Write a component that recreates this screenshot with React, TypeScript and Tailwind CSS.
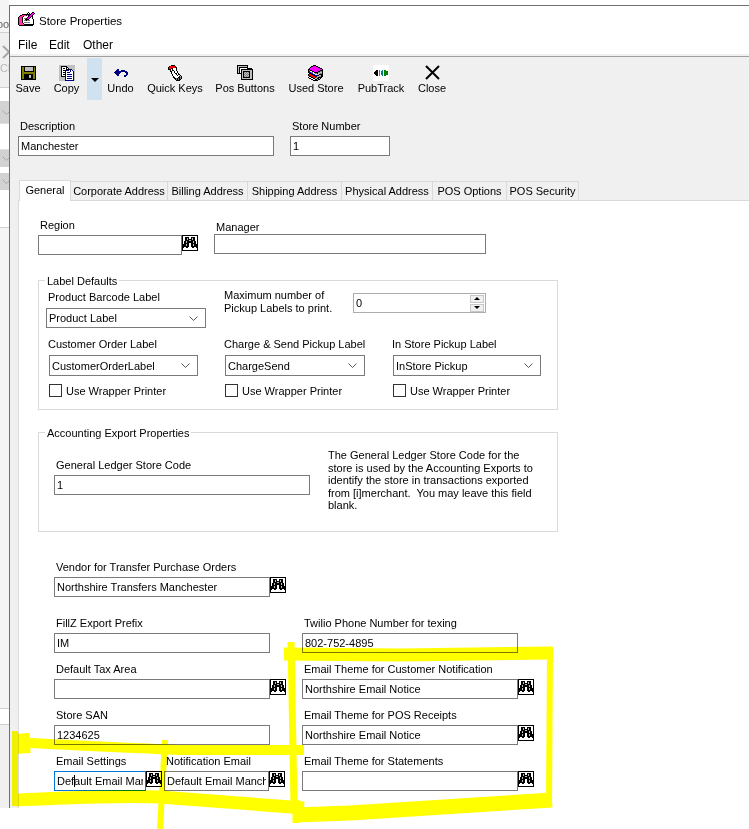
import { ReactNode } from "react";

const palette: Record<string, string> = {
  K: "#000000",
  W: "#ffffff",
  G: "#808080",
  S: "#c0c0c0",
  O: "#808000",
  N: "#000080",
  R: "#ff0000",
  M: "#ff00ff",
  P: "#ff3399",
  T: "#008080",
  E: "#008000",
  B: "#0000ff",
};

function Pixels({ rows, size }: { rows: string[]; size?: number }) {
  const w = rows[0].length;
  const h = rows.length;
  return (
    <svg width={size ?? w} height={size ? (size * h) / w : h} viewBox={`0 0 ${w} ${h}`} shapeRendering="crispEdges" className="block shrink-0">
      {rows.map((row, y) =>
        row.split("").map((c, x) =>
          palette[c] ? <rect key={`${x}-${y}`} x={x} y={y} width={1} height={1} fill={palette[c]} /> : null
        )
      )}
    </svg>
  );
}

const bino = [
  "KKKKKKKKKKKKKKKK",
  "KWWWWWWWWWWWWWWK",
  "KWWKKKKWWKKKKWWK",
  "KWWKKSKWWKSKKWWK",
  "KWWKKSKKKKSKKWWK",
  "KWWKKKKSSKKKKWWK",
  "KWKKSKKKKKKSKKWK",
  "KWKKSKKKKKKSKKWK",
  "KWKKKKKWWKKKKKWK",
  "KKKKSKKWWKKSKKKK",
  "KKKKSKKWWKKSKKKK",
  "KKKKKKKWWKKKKKKK",
  "KKWWKKWWWWKKWWKK",
  "KWWWWWWWWWWWWWWK",
  "KWWWWWWWWWWWWWWK",
  "KKKKKKKKKKKKKKKK",
];

const save = [
  "KKKKKKKKKKKKKKK",
  "KOOKSSSSSSSSKOK",
  "KOOKSSSSSSSSKOK",
  "KOOKSSSSSSSSKOK",
  "KOOKSSSSSSSSKOK",
  "KOOKKKKKKKKKKOK",
  "KOOOOOOOOOOOOOK",
  "KOOOOOOOOOOOOOK",
  "KOOKKKKKKKKKOOK",
  "KOOKKKKKSSKKOOK",
  "KOOKKKKKSSKKOOK",
  "KOOKKKKKSSKKOOK",
  "KOOKKKKKKKKKOOK",
  "KKKKKKKKKKKKKKK",
];

const copy = [
  "SSSSSSSSSSSSSSSS",
  "SSKKKKKKSSSSSSSS",
  "SSKWWWWKKSSSSSSS",
  "SSKWKKWKWKSSSSSS",
  "SSKWWWWKKKNNNSSS",
  "SSKWKKKNNNWNWNSS",
  "SSKWWWNWWWWNWWNS",
  "SSKWKKNWNNNWWWNS",
  "SSKWWWNWWWWWWWNS",
  "SSKWKKNWNNNNNWNS",
  "SSKWWWNWWWWWWWNS",
  "SSKKKKNWNNNNNWNS",
  "SSSSSSNWWWWWWWNS",
  "SSSSSSNWNNNNNWNS",
  "SSSSSSNWWWWWWWNS",
  "SSSSSSNNNNNNNNNS",
];

const undo = [
  "...NN.........",
  "..NNN..NNNN...",
  ".NNNNNNNNNNNN.",
  "NNNNNNN....NNN",
  ".NNNNN......NN",
  "..NNN.......NN",
  "...NN.....NNN.",
  "..........NN..",
];

const hand = [
  "....KKKK.........",
  "..KRRRRRK........",
  ".KRRRRRRKK.......",
  ".KRRKKWWWK.......",
  ".KKKWKWWWK.......",
  "...KWKKWWK.......",
  "...KKWWKWWK......",
  "....KWWKWWK......",
  "....KWWWKKWK.....",
  ".....KWWWKWKK....",
  ".....KWWWWKWSK...",
  "......KWWWWWKSK..",
  "......KKWWWKKGK..",
  ".......KKGKGKGK..",
  "........KGKGKK...",
  ".........KKKK....",
];

const posButtons = [
  "KKKKKKKKKKK.....",
  "KSSSSSSSSSK.....",
  "KSKKKKKKKKK.....",
  "KSKWWWWWWWKKKKK.",
  "KSKWKKKKKKKKKKKK",
  "KSKWKSSSSSSSSSSK",
  "KSKWKSKKKKKKKSSK",
  "KSKWKSKGSGSGKSSK",
  "KKKKKSKSGSGSKSSK",
  "....KSKGSGSGKSSK",
  "....KSKSGSGSKSSK",
  "....KSKGSGSGKSSK",
  "....KSKKKKKKKSSK",
  "....KSSSSSSSSSSK",
  "....KKKKKKKKKKKK",
];

const books = [
  ".....KKK........",
  "...KKMMMKK......",
  "..KMMMMMMMKK....",
  ".KMMMMMMMMMMKK..",
  "KKMMMMMMMMMMMMK.",
  "KGKKMMMMMMMMKKK.",
  "KBWWKKMMMMKKGGK.",
  "KBBGGWKKKKGGSSK.",
  ".KKBBWWGGKSSGGK.",
  "KRRKKBBWWSSKKKK.",
  "KRRRRKKBBKKSSKK.",
  ".KKRRRRKKSSGGKK.",
  "KWWKKRRKGGKKKK..",
  ".KKWWKKSSKKSK...",
  "...KKWWKKSKK....",
  ".....KKKKK......",
];

const pub = [
  "WWWWWWWWWWWWWWWW",
  "WWWWWWWWWWWWWWWW",
  "WWWWWWWWWWWWWWWW",
  "WWWWWWWWWWWWWWWW",
  "WWWWWWWWWWWWWWWW",
  "WWWKKWOWWTWEEWWW",
  "WWKKKWOWTTWEEEEW",
  "WKKKKWOWTTWEEEEW",
  "WKKKKWOWTTWEEEEW",
  "WWKKKWOWTTWEEEEW",
  "WWWKKWOWWTWEEWWW",
  "WWWWWWWWWWWWWWWW",
  "WWWWWWWWWWWWWWWW",
  "WWWWWWWWWWWWWWWW",
  "WWWWWWWWWWWWWWWW",
  "WWWWWWWWWWWWWWWW",
];

const titleIcon = [
  "..........K...KK.",
  ".........K.K.KMMK",
  "....KKKKKKKKKMMK.",
  "..KKPPPPKSKKMMK..",
  ".KPPPKWWWWKMMKK..",
  "KPPPKWWWWKMMKWK..",
  "KPPPKWGGKMMKWWK..",
  "KPPPKWWKKKKWWWWK.",
  "KPPPKWGGKGGGWWWK.",
  "KPPPKWWWWWWWWWWK.",
  "KPPPKWGGGGGGWWWK.",
  "KPPPPKWWWWWWWWWK.",
  "KPPPPPKKKKKKKKKK.",
  ".KKKKKKKKKKKKKK..",
];

function Chevron({ color = "#555555" }: { color?: string }) {
  return (
    <svg width="9" height="5" viewBox="0 0 9 5" className="shrink-0">
      <polyline points="0.5,0.5 4.5,4.5 8.5,0.5" fill="none" stroke={color} strokeWidth="1" />
    </svg>
  );
}

function Input({ value = "", width, focus }: { value?: string; width: number; focus?: boolean }) {
  return (
    <input
      readOnly
      value={value}
      style={{ width }}
      className={`block h-[20px] shrink-0 bg-white px-[2px] text-[11px] text-black outline-none border ${focus ? "border-[#0078d7]" : "border-[#7a7a7a]"}`}
    />
  );
}

function Field({
  label,
  value,
  width,
  finder,
  focus,
  gap = 3,
}: {
  label: string;
  value?: string;
  width: number;
  finder?: boolean;
  focus?: boolean;
  gap?: number;
}) {
  return (
    <div className="flex flex-col items-start">
      <div className={`pl-[2px] h-[14px] leading-[14px] whitespace-nowrap ${gap === 3 ? "mb-[3px]" : "mb-0"}`}>{label}</div>
      <div className="flex items-start">
        <Input value={value} width={width} focus={focus} />
        {finder && <Pixels rows={bino} />}
      </div>
    </div>
  );
}

function Select({ value, width, height }: { value: string; width: string; height: string }) {
  return (
    <div className={`flex items-center justify-between bg-white border border-[#7a7a7a] pl-[2px] pr-[7px] ${width} ${height}`}>
      <span className="whitespace-nowrap">{value}</span>
      <Chevron />
    </div>
  );
}

function Check() {
  return (
    <div className="flex items-center gap-[4px] ml-[1px] mt-[8px] h-[13px]">
      <div className="w-[13px] h-[13px] bg-white border border-[#333333]" />
      <span className="whitespace-nowrap">Use Wrapper Printer</span>
    </div>
  );
}

function ToolButton({ label, width, children }: { label: string; width: string; children: ReactNode }) {
  return (
    <div className={`flex flex-col items-center pt-[7px] shrink-0 ${width}`}>
      <div className="h-[17px] flex items-center justify-center">{children}</div>
      <div className="h-[14px] leading-[14px] whitespace-nowrap">{label}</div>
    </div>
  );
}

function Group({ title, height, children }: { title: string; height: string; children: ReactNode }) {
  return (
    <div className={`relative w-[520px] border border-[#dadada] ${height}`}>
      <span className="absolute -top-[7px] left-[6px] bg-white px-[2px] h-[14px] leading-[14px]">{title}</span>
      {children}
    </div>
  );
}

const tabs = [
  { label: "Corporate Address", width: "w-[97px]" },
  { label: "Billing Address", width: "w-[80px]" },
  { label: "Shipping Address", width: "w-[94px]" },
  { label: "Physical Address", width: "w-[91px]" },
  { label: "POS Options", width: "w-[74px]" },
  { label: "POS Security", width: "w-[72px]" },
];

function LeftStrip() {
  return (
    <div className="w-[9px] h-[808px] shrink-0 overflow-hidden flex flex-col bg-[#f5f5f5] text-[#666666]">
      <div className="h-[33px] border-b border-[#d0d0d0] pt-[17px] leading-[14px] -indent-[3px] shrink-0">oo</div>
      <div className="h-[55px] bg-[#f0f0f0] border-b border-[#d0d0d0] shrink-0 pt-[11px]">
        <svg width="9" height="16" viewBox="0 0 9 16" className="block">
          <polyline points="3,2 9,8 3,14" fill="none" stroke="#a8a8a8" strokeWidth="2" />
        </svg>
        <div className="text-[#b8b8b8] leading-[14px] mt-[1px]">Cl</div>
      </div>
      <div className="h-[13px] bg-white shrink-0" />
      <div className="h-[22px] bg-[#d2d2d2] shrink-0 flex items-center pl-[2px]"><Chevron color="#aaaaaa" /></div>
      <div className="h-[27px] bg-white shrink-0 border-y border-[#e0e0e0]" />
      <div className="h-[17px] bg-[#d2d2d2] shrink-0 flex items-center pl-[2px]"><Chevron color="#aaaaaa" /></div>
      <div className="h-[6px] bg-white shrink-0" />
      <div className="h-[17px] bg-[#d2d2d2] shrink-0 flex items-center pl-[2px]"><Chevron color="#aaaaaa" /></div>
      <div className="h-[38px] bg-white shrink-0 border-b border-[#d0d0d0]" />
      <div className="h-[481px] bg-[#f5f5f5] shrink-0 border-b border-[#d0d0d0]" />
      <div className="h-[16px] bg-white shrink-0 border-b border-[#d0d0d0]" />
      <div className="flex-1 bg-[#f0f0f0]" />
    </div>
  );
}

function Highlighter() {
  return (
    <svg width="749" height="829" viewBox="0 0 749 829" fill="none" stroke="#ffff00" className="absolute inset-0 mix-blend-multiply pointer-events-none">
      <path d="M15 731 L15 806" strokeWidth="6" />
      <path d="M14 744 L30 743" strokeWidth="20" />
      <path d="M14 742 C60 745 120 747 180 750 L304 750" strokeWidth="10" />
      <path d="M16 800 C60 798 120 795 160 797 C200 800 250 804 304 808" strokeWidth="13" />
      <path d="M165 740 L160 829" strokeWidth="6" />
      <path d="M291 642 L294 805" strokeWidth="7" />
      <path d="M296 800 L296 823" strokeWidth="7" />
      <path d="M284 654 L400 655 L553 653" strokeWidth="13" />
      <path d="M550 648 L549 806" strokeWidth="6" />
      <path d="M294 815 L350 813 L552 800" strokeWidth="15" />
    </svg>
  );
}

export default function App() {
  return (
    <div className="relative w-[749px] h-[829px] overflow-hidden bg-white flex items-start text-[11px] leading-[14px] text-black font-['Liberation_Sans',Arial,sans-serif]">
      <LeftStrip />

      <div className="flex-1 h-[803px] mt-[5px] border-l border-t border-[#707070] bg-[#f0f0f0] flex flex-col overflow-hidden">
        <div className="h-[24px] bg-white flex items-start gap-[4px] pl-[8px] pt-[6px] shrink-0">
          <Pixels rows={titleIcon} size={17} />
          <span className="text-[11.5px] mt-[2px]">Store Properties</span>
        </div>
        <div className="h-[24px] bg-white flex items-center pl-[8px] text-[12px] shrink-0 pt-[6px]">
          <span className="w-[31px]">File</span>
          <span className="w-[34px]">Edit</span>
          <span>Other</span>
        </div>
        <div className="h-[3px] bg-[#f0f0f0] border-b border-[#a0a0a0] shrink-0" />

        <div className="h-[47px] flex items-start shrink-0">
          <ToolButton label="Save" width="w-[36px]"><Pixels rows={save} /></ToolButton>
          <ToolButton label="Copy" width="w-[41px]"><Pixels rows={copy} /></ToolButton>
          <div className="w-[15px] h-[42px] mt-[1px] bg-[#d0e1f0] flex items-center justify-center shrink-0 pt-[2px]">
            <div className="w-0 h-0 border-x-[4px] border-x-transparent border-t-[4px] border-t-black" />
          </div>
          <ToolButton label="Undo" width="w-[37px]"><Pixels rows={undo} /></ToolButton>
          <ToolButton label="Quick Keys" width="w-[72px]"><Pixels rows={hand} /></ToolButton>
          <ToolButton label="Pos Buttons" width="w-[68px]"><Pixels rows={posButtons} /></ToolButton>
          <ToolButton label="Used Store" width="w-[74px]"><Pixels rows={books} /></ToolButton>
          <ToolButton label="PubTrack" width="w-[56px]"><Pixels rows={pub} /></ToolButton>
          <ToolButton label="Close" width="w-[46px]">
            <svg width="15" height="15" viewBox="0 0 15 15" className="block">
              <path d="M1 1 L14 14 M14 1 L1 14" stroke="#000000" strokeWidth="2" />
            </svg>
          </ToolButton>
        </div>

        <div className="flex mt-[15px] ml-[8px] shrink-0">
          <Field label="Description" value="Manchester" width={256} />
          <div className="ml-[16px]">
            <Field label="Store Number" value="1" width={100} />
          </div>
        </div>

        <div className="flex items-end mt-[24px] ml-[9px] h-[20px] shrink-0 relative z-10">
          <div className="w-[52px] h-[21px] -mb-[1px] bg-white border-x border-t border-[#dadada] flex items-start justify-center pt-[2px]">General</div>
          {tabs.map((t) => (
            <div key={t.label} className={`${t.width} h-[19px] border-t border-r border-[#dadada] flex items-center justify-center whitespace-nowrap`}>
              {t.label}
            </div>
          ))}
        </div>

        <div className="flex-1 ml-[8px] bg-white border-l border-t border-[#dadada] pl-[19px]">
          <div className="flex items-start">
            <div className="mt-[17px]">
              <Field label="Region" width={144} finder />
            </div>
            <div className="ml-[16px] mt-[19px]">
              <Field label="Manager" width={272} gap={0} />
            </div>
          </div>

          <div className="mt-[25px]">
            <Group title="Label Defaults" height="h-[130px]">
              <div className="flex items-start pt-[9px] pl-[7px]">
                <div className="w-[160px]">
                  <div className="pl-[2px] mb-[4px]">Product Barcode Label</div>
                  <Select value="Product Label" width="w-[160px]" height="h-[20px]" />
                </div>
                <div className="ml-[18px] w-[129px] -mt-[1px] leading-[13px]">
                  Maximum number of
                  <br />
                  Pickup Labels to print.
                </div>
                <div className="mt-[3px] w-[133px] h-[20px] border border-[#adadad] bg-white flex items-center justify-between pl-[2px] pr-[1px]">
                  <span>0</span>
                  <div className="flex flex-col gap-[1px]">
                    <div className="w-[14px] h-[8px] bg-[#f0f0f0] border border-[#c8c8c8] flex items-center justify-center">
                      <div className="w-0 h-0 border-x-[3px] border-x-transparent border-b-[3px] border-b-black" />
                    </div>
                    <div className="w-[14px] h-[8px] bg-[#f0f0f0] border border-[#c8c8c8] flex items-center justify-center">
                      <div className="w-0 h-0 border-x-[3px] border-x-transparent border-t-[3px] border-t-black" />
                    </div>
                  </div>
                </div>
              </div>
              <div className="grid grid-cols-[176px_168px_160px] mt-[9px] ml-[9px]">
                <div>
                  <div className="mb-[4px] whitespace-nowrap">Customer Order Label</div>
                  <div className="ml-[1px]"><Select value="CustomerOrderLabel" width="w-[149px]" height="h-[21px]" /></div>
                  <Check />
                </div>
                <div>
                  <div className="mb-[4px] whitespace-nowrap">Charge &amp; Send Pickup Label</div>
                  <div className="ml-[1px]"><Select value="ChargeSend" width="w-[140px]" height="h-[21px]" /></div>
                  <Check />
                </div>
                <div>
                  <div className="mb-[4px] whitespace-nowrap">In Store Pickup Label</div>
                  <div className="ml-[1px]"><Select value="InStore Pickup" width="w-[148px]" height="h-[21px]" /></div>
                  <Check />
                </div>
              </div>
            </Group>
          </div>

          <div className="mt-[22px]">
            <Group title="Accounting Export Properties" height="h-[100px]">
              <div className="flex items-start">
                <div className="ml-[15px] mt-[25px]">
                  <Field label="General Ledger Store Code" value="1" width={256} />
                </div>
                <div className="ml-[18px] mt-[16px] leading-[12.5px] whitespace-pre">
                  {"The General Ledger Store Code for the\nstore is used by the Accounting Exports to\nidentify the store in transactions exported\nfrom [i]merchant.  You may leave this field\nblank."}
                </div>
              </div>
            </Group>
          </div>

          <div className="ml-[16px] mt-[28px]">
            <Field label="Vendor for Transfer Purchase Orders" value="Northshire Transfers Manchester" width={216} finder />
            <div className="flex mt-[19px]">
              <div className="w-[248px] flex flex-col gap-[9px]">
                <Field label="FillZ Export Prefix" value="IM" width={216} />
                <Field label="Default Tax Area" width={216} finder />
                <Field label="Store SAN" value="1234625" width={216} />
                <div className="flex gap-[2px]">
                  <Field label="Email Settings" value="Default Email Manchester" width={92} finder focus />
                  <Field label="Notification Email" value="Default Email Manchester" width={105} finder />
                </div>
              </div>
              <div className="flex flex-col gap-[9px]">
                <Field label="Twilio Phone Number for texing" value="802-752-4895" width={216} />
                <Field label="Email Theme for Customer Notification" value="Northshire Email Notice" width={216} finder />
                <Field label="Email Theme for POS Receipts" value="Northshire Email Notice" width={216} finder />
                <Field label="Email Theme for Statements" width={216} finder />
              </div>
            </div>
          </div>
        </div>
      </div>

      <Highlighter />
      <div className="absolute left-[74px] top-[775px] w-[1px] h-[12px] bg-black" />
    </div>
  );
}
